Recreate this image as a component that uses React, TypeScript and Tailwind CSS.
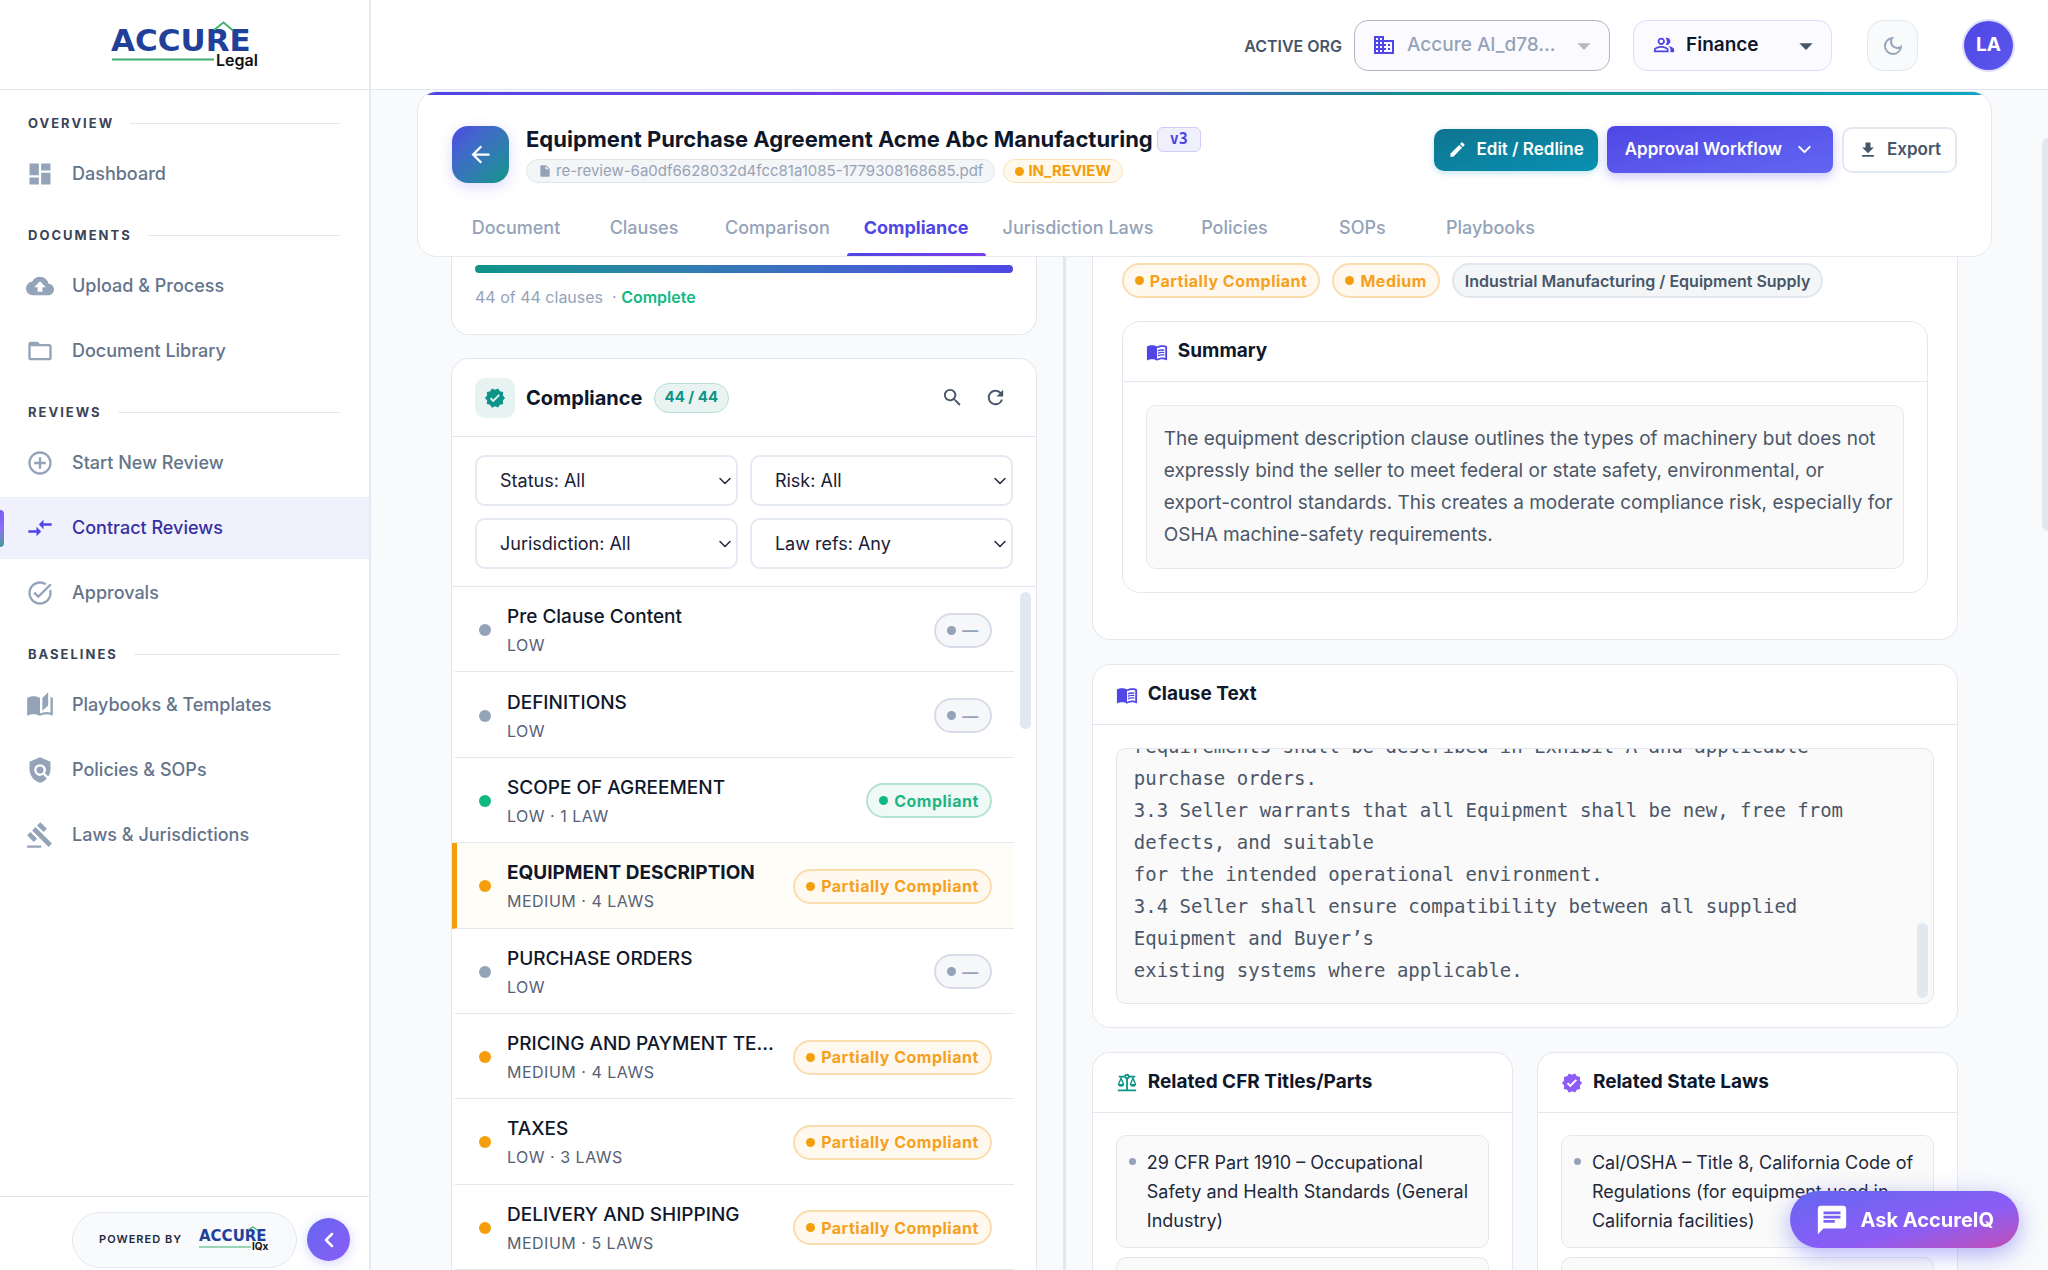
import type { ReactNode } from "react";
import type { IconType } from "react-icons";
import {
  MdArrowBack,
  MdArrowDropDown,
  MdAutoStories,
  MdBalance,
  MdChat,
  MdCloudUpload,
  MdCompareArrows,
  MdControlPoint,
  MdDashboard,
  MdDomain,
  MdDownload,
  MdEdit,
  MdFolderOpen,
  MdGavel,
  MdInsertDriveFile,
  MdMenuBook,
  MdOutlineDarkMode,
  MdOutlinePeopleAlt,
  MdPolicy,
  MdRefresh,
  MdSearch,
  MdTaskAlt,
  MdVerified,
} from "react-icons/md";
import { ChevronDown, ChevronLeft } from "lucide-react";

type NavItem = { label: string; icon: IconType; active?: boolean };

const NAV: { title: string; items: NavItem[] }[] = [
  { title: "OVERVIEW", items: [{ label: "Dashboard", icon: MdDashboard }] },
  {
    title: "DOCUMENTS",
    items: [
      { label: "Upload & Process", icon: MdCloudUpload },
      { label: "Document Library", icon: MdFolderOpen },
    ],
  },
  {
    title: "REVIEWS",
    items: [
      { label: "Start New Review", icon: MdControlPoint },
      { label: "Contract Reviews", icon: MdCompareArrows, active: true },
      { label: "Approvals", icon: MdTaskAlt },
    ],
  },
  {
    title: "BASELINES",
    items: [
      { label: "Playbooks & Templates", icon: MdAutoStories },
      { label: "Policies & SOPs", icon: MdPolicy },
      { label: "Laws & Jurisdictions", icon: MdGavel },
    ],
  },
];

const TABS = [
  "Document",
  "Clauses",
  "Comparison",
  "Compliance",
  "Jurisdiction Laws",
  "Policies",
  "SOPs",
  "Playbooks",
];

type Status = "none" | "ok" | "partial";

const CLAUSES: { name: string; meta: string; status: Status; active?: boolean }[] = [
  { name: "Pre Clause Content", meta: "LOW", status: "none" },
  { name: "DEFINITIONS", meta: "LOW", status: "none" },
  { name: "SCOPE OF AGREEMENT", meta: "LOW · 1 LAW", status: "ok" },
  { name: "EQUIPMENT DESCRIPTION", meta: "MEDIUM · 4 LAWS", status: "partial", active: true },
  { name: "PURCHASE ORDERS", meta: "LOW", status: "none" },
  { name: "PRICING AND PAYMENT TERMS", meta: "MEDIUM · 4 LAWS", status: "partial" },
  { name: "TAXES", meta: "LOW · 3 LAWS", status: "partial" },
  { name: "DELIVERY AND SHIPPING", meta: "MEDIUM · 5 LAWS", status: "partial" },
];

const DOT: Record<Status, string> = {
  none: "bg-[#94a3b8]",
  ok: "bg-[#10b981]",
  partial: "bg-[#f59e0b]",
};

const CHIP: Record<Status, string> = {
  none: "border-[#d9dce6] bg-[#f6f7fb] text-[#94a3b8]",
  ok: "border-[#b5e3d2] bg-[#eff9f6] text-[#1fb583]",
  partial: "border-[#fbdcae] bg-[#fff8ee] text-[#f5a11d]",
};

const CHIP_LABEL: Record<Status, string> = {
  none: "—",
  ok: "Compliant",
  partial: "Partially Compliant",
};

function Chip({ status, label }: { status: Status; label?: string }) {
  return (
    <span
      className={`flex h-[35px] shrink-0 items-center gap-1.5 rounded-full border-2 px-[11px] text-base font-bold tracking-[0.5px] ${CHIP[status]}`}
    >
      <span className={`size-[9px] rounded-full ${DOT[status]}`} />
      {label ?? CHIP_LABEL[status]}
    </span>
  );
}

function MainLogo() {
  return (
    <svg viewBox="0 0 148 50" className="h-[50px] w-[148px]" role="img" aria-label="Accure Legal">
      <text x="0" y="31" fontFamily="DejaVu Sans" fontWeight="700" fontSize="31" fill="#21409a">
        ACCURE
      </text>
      <path d="M103 10 L112.500 2.500 L122 10.500" fill="none" stroke="#3bb273" strokeWidth="1.800" />
      <path d="M1 39.500 H103" stroke="#3fae6f" strokeWidth="2" />
      <text x="105" y="46" fontFamily="Inter" fontWeight="600" fontSize="16" fill="#111111">
        Legal
      </text>
    </svg>
  );
}

function SmallLogo() {
  return (
    <svg viewBox="0 0 72 28" className="h-7 w-[72px]" role="img" aria-label="Accure IQx">
      <text x="1" y="15" fontFamily="DejaVu Sans" fontWeight="700" fontSize="15" fill="#21409a">
        ACCURE
      </text>
      <path d="M50 4 L55 1 L60 4.500" fill="none" stroke="#3bb273" strokeWidth="1.200" />
      <path d="M1 21 H53" stroke="#3fae6f" strokeWidth="1.200" />
      <text x="54" y="24" fontFamily="Inter" fontWeight="700" fontSize="10" fill="#111111">
        IQx
      </text>
    </svg>
  );
}

function Sidebar() {
  return (
    <aside className="flex w-[371px] shrink-0 flex-col border-r-2 border-[#e6e8f2] bg-white">
      <div className="flex h-[90px] shrink-0 items-center justify-center border-b border-[#e2e4f0]">
        <MainLogo />
      </div>
      <nav className="flex-1 pt-[6px]">
        {NAV.map((section) => (
          <section key={section.title}>
            <div className="flex items-center gap-4 pt-[17px] pr-[29px] pb-[10px] pl-7">
              <h2 className="text-[13px] leading-5 font-bold tracking-[2px] text-[#3b4456]">
                {section.title}
              </h2>
              <span className="h-px flex-1 bg-[#e2e8ee]" />
            </div>
            {section.items.map(({ label, icon: Icon, active }) => (
              <a
                key={label}
                href="#"
                className={`relative mb-[3px] flex h-[62px] items-center gap-[18px] pl-[26px] text-lg font-medium ${
                  active ? "bg-[#f1f1fd] text-[#3730a3]" : "text-[#64748b]"
                }`}
              >
                {active && (
                  <span className="absolute top-[13px] left-0 h-[37px] w-1 rounded-r-md bg-linear-to-b from-[#7c5cf6] via-[#8b6cf6] to-[#3a9c94]" />
                )}
                <Icon size={28} className={active ? "text-[#4f46e5]" : "text-[#94a3b8]"} />
                {label}
              </a>
            ))}
          </section>
        ))}
      </nav>
      <div className="flex h-[74px] shrink-0 items-center justify-end gap-[10px] border-t border-[#e2e4f0] pt-3 pr-[19px]">
        <div className="flex h-[56px] items-center gap-4 rounded-full border border-[#e2e8f0] bg-[#f8fafc] px-[26px]">
          <span className="text-[11px] font-semibold tracking-[1px] text-[#1e293b]">POWERED BY</span>
          <SmallLogo />
        </div>
        <button
          aria-label="Collapse sidebar"
          className="flex size-[43px] items-center justify-center rounded-full bg-linear-to-br from-[#6366f1] to-[#8b5cf6] text-white shadow-[0_2px_12px_rgba(99,102,241,0.3)]"
        >
          <ChevronLeft size={24} strokeWidth={2.5} />
        </button>
      </div>
    </aside>
  );
}

function TopBar() {
  return (
    <header className="flex h-[90px] shrink-0 items-center justify-end border-b border-[#e2e4f0] bg-white pt-[2px] pr-[35px]">
      <label htmlFor="org" className="mr-3 text-base font-semibold text-[#475569]">
        ACTIVE ORG
      </label>
      <div className="relative mr-[23px]">
        <MdDomain size={24} className="pointer-events-none absolute top-[13px] left-[18px] text-[#4f46e5]" />
        <select
          id="org"
          disabled
          className="h-[51px] w-[256px] appearance-none rounded-[14px] border border-[#b4b6bd] bg-[#fbfbff] pl-[52px] text-[19px] font-medium text-[#94a3b8] opacity-100"
        >
          <option>Accure AI_d78...</option>
        </select>
        <MdArrowDropDown size={32} className="pointer-events-none absolute top-[10px] right-[10px] text-[#b6b8bd]" />
      </div>
      <div className="relative mr-[35px]">
        <MdOutlinePeopleAlt size={22} className="pointer-events-none absolute top-[14px] left-5 text-[#4f46e5]" />
        <select
          aria-label="Department"
          className="h-[51px] w-[199px] appearance-none rounded-[14px] border border-[#dfdcfa] bg-[#fbfbff] pl-[52px] text-[19px] font-semibold text-[#0f172a]"
        >
          <option>Finance</option>
        </select>
        <MdArrowDropDown size={32} className="pointer-events-none absolute top-[10px] right-[10px] text-[#475569]" />
      </div>
      <button
        aria-label="Dark mode"
        className="mr-[46px] flex size-[51px] items-center justify-center rounded-2xl border border-[#e2e8f0] bg-[#f8fafc] text-[#94a3b8]"
      >
        <MdOutlineDarkMode size={24} />
      </button>
      <button className="flex size-[49px] items-center justify-center rounded-full bg-linear-to-br from-[#4f46e5] to-[#5b57ec] text-[19px] font-bold text-white ring-2 ring-[#dfdffb]">
        LA
      </button>
    </header>
  );
}

function DocumentHeader() {
  return (
    <section className="mt-px overflow-hidden rounded-[20px] border border-[#e6e9ee] bg-white">
      <div className="h-[3px] bg-[linear-gradient(90deg,#4f46e5,#7c3aed_33%,#0d9488_66%,#0ea5c6)]" />
      <div className="flex items-center pt-[30px] pr-[34px] pl-[34px]">
        <button
          aria-label="Back"
          className="mr-[17px] flex size-[57px] items-center justify-center rounded-2xl bg-linear-to-br from-[#4f46e5] to-[#0d9488] text-white shadow-[0_4px_14px_rgba(79,70,229,0.2)]"
        >
          <MdArrowBack size={27} />
        </button>
        <div>
          <div className="flex items-center gap-1">
            <h1 className="text-[22px] leading-[28px] font-bold text-[#0f172a]">
              Equipment Purchase Agreement Acme Abc Manufacturing
            </h1>
            <span className="flex h-[25px] items-center rounded-md border border-[#cfccf8] bg-[#f0f0fd] px-3 font-['DejaVu_Sans_Mono',monospace] text-[15px] font-bold text-[#4f46e5]">
              v3
            </span>
          </div>
          <div className="mt-[6px] flex items-center gap-2 text-[15px]">
            <span className="flex h-6 items-center gap-1 rounded-full border border-[#e2e5ea] bg-[#f4f5f6] px-[11px] text-[#94a3b8]">
              <MdInsertDriveFile size={14} />
              re-review-6a0df6628032d4fcc81a1085-1779308168685.pdf
            </span>
            <span className="flex h-6 items-center gap-1 rounded-full border border-[#fce0b8] bg-[#fff8ec] px-[11px] font-bold text-[#f59e0b]">
              <span className="size-[9px] rounded-full bg-[#f59e0b]" />
              IN_REVIEW
            </span>
          </div>
        </div>
        <div className="mb-[9px] ml-auto flex items-center gap-[9px] text-[17px] font-semibold">
          <button className="flex h-[42px] items-center gap-[9px] rounded-[10px] bg-linear-to-br from-[#0e7490] to-[#0891b2] px-[14px] text-white shadow-[0_2px_6px_rgba(8,145,178,0.25)]">
            <MdEdit size={19} />
            Edit / Redline
          </button>
          <button className="flex h-[47px] items-center gap-3 rounded-lg bg-linear-to-br from-[#4f46e5] to-[#6366f1] px-[18px] text-white shadow-[0_4px_12px_rgba(79,70,229,0.3)]">
            Approval Workflow
            <ChevronDown size={21} strokeWidth={2.25} />
          </button>
          <button className="flex h-[46px] items-center gap-[9px] rounded-[10px] border-2 border-[#e2e8f0] bg-white px-[14px] text-[#475569]">
            <MdDownload size={20} />
            Export
          </button>
        </div>
      </div>
      <div role="tablist" className="mt-[15px] flex pl-[34px] text-lg">
        {TABS.map((tab) => {
          const active = tab === "Compliance";
          return (
            <button
              key={tab}
              role="tab"
              aria-selected={active}
              className={`flex h-[58px] min-w-[128px] flex-col items-center justify-end px-[17px] ${
                active ? "font-bold text-[#4f46e5]" : "font-medium text-[#94a3b8]"
              }`}
            >
              <span className="pb-[11px]">{tab}</span>
              <span
                className={`-mx-[17px] h-[3px] self-stretch rounded-t-sm ${
                  active ? "bg-linear-to-r from-[#4f46e5] to-[#7c3aed]" : "bg-transparent"
                }`}
              />
            </button>
          );
        })}
      </div>
    </section>
  );
}

function Filter({ label }: { label: string }) {
  return (
    <div className="relative">
      <select
        aria-label={label}
        className="h-[51px] w-full appearance-none rounded-[10px] border-2 border-[#e4e9f2] bg-white pl-[23px] text-lg text-[#1a2036]"
      >
        <option>{label}</option>
      </select>
      <ChevronDown
        size={20}
        strokeWidth={1.75}
        className="pointer-events-none absolute top-4 right-[3px] text-[#1e293b]"
      />
    </div>
  );
}

function ClauseList() {
  return (
    <div className="flex flex-col">
      <section className="rounded-b-[18px] border border-t-0 border-[#e4e8ee] bg-white px-[23px] pt-2 pb-[25px]">
        <div className="h-2 rounded-full bg-linear-to-r from-[#0d9488] to-[#4f46e5]" />
        <p className="mt-3 text-base leading-6 text-[#94a3b8]">
          44 of 44 clauses &nbsp;· <span className="font-semibold text-[#10b981]">Complete</span>
        </p>
      </section>
      <section className="mt-[23px] rounded-t-[18px] border border-b-0 border-[#e4e8ee] bg-white">
        <div className="flex h-[78px] items-center border-b border-[#e4e8ee] pr-5 pl-[23px]">
          <span className="flex size-10 items-center justify-center rounded-[10px] bg-[#e7f3f1] text-[#0d9488]">
            <MdVerified size={22} />
          </span>
          <h2 className="ml-[11px] text-xl font-bold text-[#0f172a]">Compliance</h2>
          <span className="ml-[11px] flex h-[30px] items-center rounded-full border border-[#b7dfd8] bg-[#e9f4f2] px-[10px] text-[15px] font-bold text-[#0d9488]">
            44 / 44
          </span>
          <button aria-label="Search clauses" className="ml-auto p-[9px] text-[#475569]">
            <MdSearch size={23} />
          </button>
          <button aria-label="Refresh" className="ml-[2px] p-[9px] text-[#475569]">
            <MdRefresh size={23} />
          </button>
        </div>
        <div className="grid grid-cols-2 gap-3 border-b border-[#e4e8ee] px-[23px] pt-[18px] pb-[17px]">
          <Filter label="Status: All" />
          <Filter label="Risk: All" />
          <Filter label="Jurisdiction: All" />
          <Filter label="Law refs: Any" />
        </div>
        <div className="flex">
          <ul className="grid h-[683px] min-w-0 flex-1 grid-rows-8">
            {CLAUSES.map((clause) => (
              <li
                key={clause.name}
                className={`flex items-center gap-3 border-b border-l-[5px] border-b-[#e4e7ec] pt-[2px] pr-[22px] pl-[22px] ${
                  clause.active ? "border-l-[#f59e0b] bg-[#fffdf8]" : "border-l-transparent"
                }`}
              >
                <span className={`size-3 shrink-0 rounded-full ${DOT[clause.status]}`} />
                <div className="ml-1 min-w-0 flex-1 pt-[2px]">
                  <h3
                    className={`truncate text-[19px] leading-7 text-[#0f172a] ${
                      clause.active ? "font-bold" : "font-medium"
                    }`}
                  >
                    {clause.name}
                  </h3>
                  <p className="text-base leading-7 tracking-[0.5px] text-[#566176]">{clause.meta}</p>
                </div>
                <Chip status={clause.status} />
              </li>
            ))}
          </ul>
          <div className="w-[22px] pt-[5px] pl-[6px]">
            <div className="h-[137px] w-[11px] rounded-full bg-[#e2e8f0]" />
          </div>
        </div>
      </section>
    </div>
  );
}

function CardHeader({ icon, title }: { icon: ReactNode; title: string }) {
  return (
    <div className="flex h-[60px] items-center gap-[10px] border-b border-[#e4e8ee] px-[23px]">
      {icon}
      <h2 className="text-[19px] font-bold text-[#0f172a]">{title}</h2>
    </div>
  );
}

function LawCard({ icon, title, text }: { icon: ReactNode; title: string; text: string }) {
  return (
    <section className="rounded-t-[18px] border border-b-0 border-[#e4e8ee] bg-white">
      <CardHeader icon={icon} title={title} />
      <ul className="flex flex-col gap-[9px] px-[23px] pt-[22px]">
        <li className="flex gap-[11px] rounded-[10px] border border-[#e4e8ee] bg-[#fafafa] py-3 pr-3 pl-3 text-lg leading-[29px] text-[#1e293b]">
          <span className="mt-[10px] size-[7px] shrink-0 rounded-full bg-[#94a3b8]" />
          {text}
        </li>
        <li className="h-10 rounded-t-[10px] border border-b-0 border-[#e4e8ee] bg-[#fafafa]" />
      </ul>
    </section>
  );
}

const CLAUSE_TEXT = `requirements shall be described in Exhibit A and applicable
purchase orders.
3.3 Seller warrants that all Equipment shall be new, free from
defects, and suitable
for the intended operational environment.
3.4 Seller shall ensure compatibility between all supplied
Equipment and Buyer’s
existing systems where applicable.`;

function ClauseDetail() {
  return (
    <div className="flex min-w-0 flex-col gap-[24px]">
      <section className="rounded-b-[18px] border border-t-0 border-[#e4e8ee] bg-white px-[29px] pt-[6px] pb-[46px]">
        <div className="flex gap-3">
          <Chip status="partial" />
          <Chip status="partial" label="Medium" />
          <span className="flex h-[35px] items-center rounded-full border-2 border-[#e2e6ee] bg-[#f4f5f6] px-[11px] text-base font-semibold text-[#475569]">
            Industrial Manufacturing / Equipment Supply
          </span>
        </div>
        <div className="mt-[23px] rounded-[18px] border border-[#e4e8ee]">
          <CardHeader icon={<MdMenuBook size={22} className="text-[#4f46e5]" />} title="Summary" />
          <div className="p-[23px]">
            <p className="rounded-[10px] border border-[#e4e8ee] bg-[#fafafa] py-[17px] pr-2 pl-[17px] text-[19px] leading-8 text-[#4b5768]">
              The equipment description clause outlines the types of machinery but does not expressly bind the
              seller to meet federal or state safety, environmental, or export-control standards. This creates a
              moderate compliance risk, especially for OSHA machine-safety requirements.
            </p>
          </div>
        </div>
      </section>

      <section className="rounded-[18px] border border-[#e4e8ee] bg-white">
        <CardHeader icon={<MdMenuBook size={22} className="text-[#4f46e5]" />} title="Clause Text" />
        <div className="p-[23px]">
          <div className="relative flex h-[256px] flex-col justify-end overflow-hidden rounded-[10px] border border-[#e2e6ee] bg-[#fafafa] pb-[17px] pl-[17px]">
            <pre className="font-['DejaVu_Sans_Mono',monospace] text-[19px] leading-8 whitespace-pre-wrap text-[#4b5768]">
              {CLAUSE_TEXT}
            </pre>
            <span className="absolute right-[5px] bottom-[5px] h-[75px] w-[11px] rounded-full bg-[#e2e8f0]" />
          </div>
        </div>
      </section>

      <div className="grid grid-cols-2 gap-[24px]">
        <LawCard
          icon={<MdBalance size={22} className="text-[#0d9488]" />}
          title="Related CFR Titles/Parts"
          text="29 CFR Part 1910 – Occupational Safety and Health Standards (General Industry)"
        />
        <LawCard
          icon={<MdVerified size={22} className="text-[#8b5cf6]" />}
          title="Related State Laws"
          text="Cal/OSHA – Title 8, California Code of Regulations (for equipment used in California facilities)"
        />
      </div>
    </div>
  );
}

export default function App() {
  return (
    <div className="flex h-screen overflow-hidden bg-[#f8fafc] font-['Inter',sans-serif] text-[#0f172a]">
      <Sidebar />
      <div className="flex min-w-0 flex-1 flex-col">
        <TopBar />
        <main className="flex min-h-0 flex-1 overflow-hidden">
          <div className="min-w-0 flex-1 pl-[46px]">
            <DocumentHeader />
            <div className="grid grid-cols-[585fr_3px_865fr] gap-x-[26px] pr-[34px] pl-[34px]">
              <ClauseList />
              <div className="bg-[#e2e6ef]" />
              <ClauseDetail />
            </div>
          </div>
          <div className="w-[56px] shrink-0 pt-12">
            <div className="ml-auto h-[393px] w-[6px] rounded-l-full bg-[#e2e8f0]" />
          </div>
        </main>
      </div>
      <button className="fixed right-[29px] bottom-[22px] flex h-[57px] items-center gap-3 rounded-full bg-linear-to-br from-[#6366f1] via-[#8b5cf6] via-60% to-[#c04bb5] px-[25px] text-xl font-bold text-white shadow-[0_6px_22px_rgba(99,102,241,0.5)]">
        <MdChat size={34} />
        Ask AccureIQ
      </button>
    </div>
  );
}
